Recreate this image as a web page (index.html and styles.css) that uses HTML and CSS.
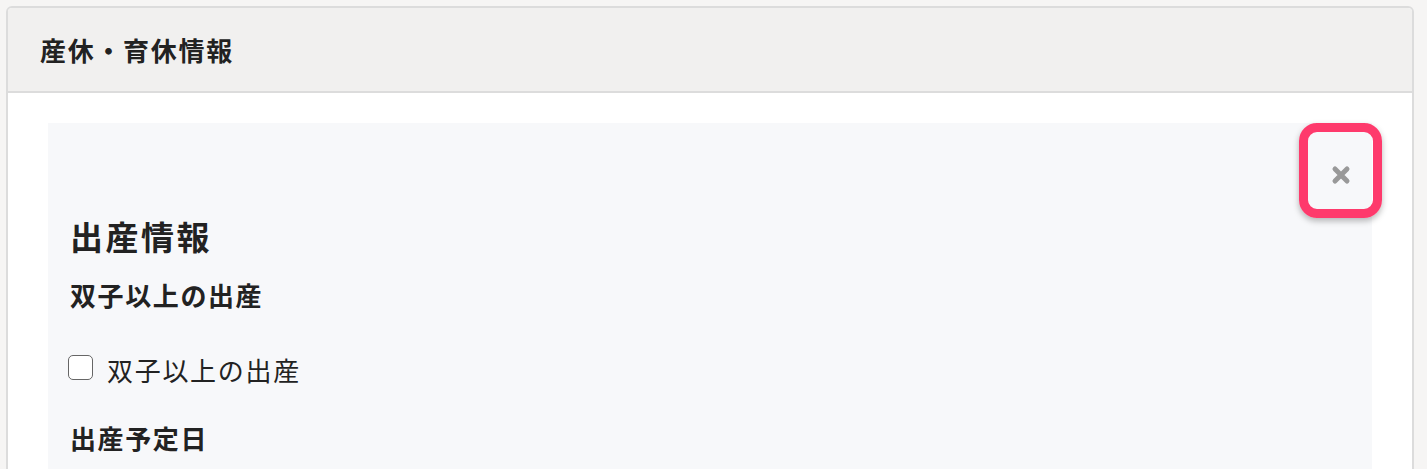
FILE: index.html
```html
<!DOCTYPE html>
<html lang="ja">
<head>
<meta charset="utf-8">
<link rel="stylesheet" href="styles.css">
</head>
<body>
<div class="card">
  <div class="card-header">産休・育休情報</div>
  <div class="card-body">
    <div class="panel">
      <div class="panel-top">
        <div class="close-wrap">
          <button class="close-btn" type="button" aria-label="削除">
            <svg width="20" height="20" viewBox="0 0 20 20"><path d="M4 4 L16 16 M16 4 L4 16" stroke="#999" stroke-width="5" stroke-linecap="round"/></svg>
          </button>
          <span class="highlight"></span>
        </div>
      </div>
      <h2 class="section-title">出産情報</h2>
      <div class="field-label">双子以上の出産</div>
      <label class="check-row"><span class="checkbox"></span><span class="check-text">双子以上の出産</span></label>
      <div class="field-label field-label-2">出産予定日</div>
    </div>
  </div>
</div>
</body>
</html>
```

FILE: styles.css
```css
* { box-sizing: border-box; }
html, body { height: 100%; }
body {
  margin: 0;
  padding: 6px 0 0 6px;
  background: #f6f5f4;
  font-family: "Noto Sans CJK JP", "Noto Sans", sans-serif;
  color: #222;
  overflow: hidden;
}
.card {
  width: 1408px;
  min-height: 600px;
  border: 2px solid #dcdcdc;
  border-radius: 6px;
  background: #fff;
  overflow: hidden;
}
.card-header {
  height: 85px;
  background: #f1f0ef;
  border-bottom: 2px solid #dcdcdc;
  padding-left: 32px;
  display: flex;
  align-items: center;
  font-size: 26px;
  font-weight: 700;
  letter-spacing: 1.7px;
}
.card-body {
  padding: 30px 40px;
}
.panel {
  background: #f7f8fa;
  padding: 0 22px 40px 22px;
  min-height: 500px;
}
.panel-top {
  height: 72px;
  display: flex;
  justify-content: flex-end;
  align-items: flex-end;
}
.close-wrap {
  position: relative;
  margin-right: -11px;
}
.close-btn {
  width: 40px;
  height: 40px;
  border: 0;
  padding: 0;
  background: transparent;
  display: flex;
  align-items: center;
  justify-content: center;
  cursor: pointer;
}
.highlight {
  position: absolute;
  left: -22px;
  top: -32px;
  width: 83px;
  height: 95px;
  border: 9px solid #fe3a6c;
  border-radius: 18px;
  box-shadow: 0 3px 6px rgba(0, 0, 0, 0.28);
  pointer-events: none;
}
.section-title {
  margin: 20px 0 0 0;
  font-size: 33px;
  line-height: 43px;
  font-weight: 700;
  letter-spacing: 2.5px;
}
.field-label {
  margin-top: 19px;
  font-size: 26px;
  line-height: 36px;
  font-weight: 700;
  letter-spacing: 1.6px;
}
.field-label-2 {
  margin-top: 33px;
}
.check-row {
  margin-top: 38px;
  height: 36px;
  display: flex;
  align-items: center;
  font-size: 26px;
  letter-spacing: 1.7px;
}
.checkbox {
  width: 25px;
  height: 25px;
  border: 1.5px solid #666;
  border-radius: 5px;
  background: #fff;
  margin-left: -2px;
  margin-right: 14px;
  margin-top: -3px;
}
.check-text {
  font-weight: 400;
}
```
